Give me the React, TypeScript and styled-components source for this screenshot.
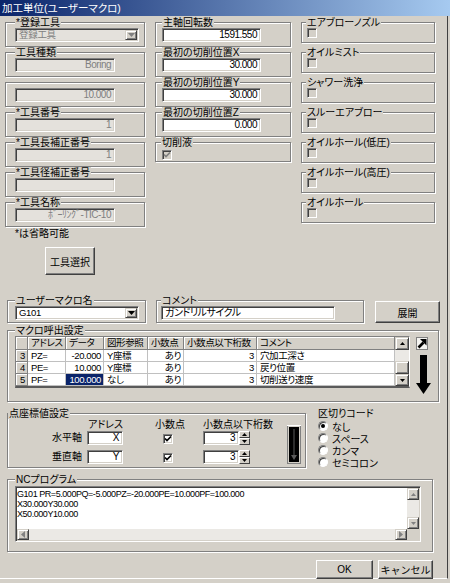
import React from "react";
import styled, { createGlobalStyle } from "styled-components";

const FACE = "#d4d0c8";
const SHADOW = "#808080";
const DARK = "#404040";
const HILITE = "#ffffff";

const GlobalStyle = createGlobalStyle`
  html, body { margin: 0; padding: 0; background: ${FACE}; }
  body {
    font-family: "Liberation Sans", "Noto Sans CJK JP", sans-serif;
    font-size: 10px;
    color: #000;
    font-feature-settings: "palt";
  }
  *, *::before, *::after { box-sizing: border-box; }
`;

const Window = styled.div`
  width: 450px;
  height: 583px;
  background: ${FACE};
  display: flex;
  flex-direction: column;
  overflow: hidden;
`;

const TitleBar = styled.div`
  height: 16px;
  flex: none;
  background: linear-gradient(to right, #0a246a 0%, #a6caf0 100%);
  color: #fff;
  padding-left: 2px;
  line-height: 16px;
  font-size: 10.5px;
  white-space: nowrap;
`;

const Body = styled.div`
  width: 448px;
  height: 563px;
  flex: none;
  border-right: 1px solid ${DARK};
  border-bottom: 1px solid ${HILITE};
  padding: 1px 0 0 5px;
  display: flex;
  flex-direction: column;
`;

const TopSection = styled.div`
  display: grid;
  grid-template-columns: 140px 136px 134px;
  column-gap: 10px;
  align-items: start;
  width: 430px;
`;

const Column = styled.div<{ $gap?: number }>`
  display: flex;
  flex-direction: column;
  gap: ${(p) => p.$gap ?? 0}px;
`;

const Group = styled.fieldset<{
  $pl?: number;
  $pr?: number;
  $pb?: number;
  $w?: number;
  $bare?: boolean;
}>`
  margin: ${(p) => (p.$bare ? "5px 0 0 0" : "0")};
  min-width: 0;
  min-inline-size: 0;
  ${(p) => (p.$w ? `width: ${p.$w}px; flex: none;` : "")}
  border: 1px solid ${SHADOW};
  box-shadow: 1px 1px 0 ${HILITE}, inset 1px 1px 0 ${HILITE};
  padding: ${(p) => (p.$bare ? 5 : 0)}px ${(p) => p.$pr ?? 4}px ${(p) => p.$pb ?? 4}px
    ${(p) => p.$pl ?? 4}px;
`;

const Legend = styled.legend`
  padding: 0 1px;
  margin-left: 0;
  height: 11px;
  line-height: 11px;
  font-size: 10px;
  background: ${FACE};
  white-space: nowrap;
`;

const sunken = `
  border: 1px solid;
  border-color: ${SHADOW} ${HILITE} ${HILITE} ${SHADOW};
  box-shadow: inset 1px 1px 0 ${DARK}, inset -1px -1px 0 ${FACE};
`;

const raised = `
  border: 1px solid;
  border-color: ${FACE} ${DARK} ${DARK} ${FACE};
  box-shadow: inset 1px 1px 0 ${HILITE}, inset -1px -1px 0 ${SHADOW};
`;

const Field = styled.div<{ $off?: boolean; $align?: "left" | "right"; $w?: number }>`
  height: 14px;
  ${(p) => (p.$w ? `width: ${p.$w}px; flex: none;` : "width: 100%;")}
  ${sunken}
  background: ${(p) => (p.$off ? "#e4e1dc" : "#fff")};
  color: ${(p) => (p.$off ? SHADOW : "#000")};
  text-align: ${(p) => p.$align ?? "right"};
  padding: 0 3px;
  font-size: 10px;
  letter-spacing: -0.5px;
  line-height: 12px;
  white-space: nowrap;
  overflow: hidden;
`;

const Combo = styled.div<{ $off?: boolean }>`
  height: 14px;
  width: 100%;
  display: flex;
  align-items: stretch;
  ${sunken}
  padding: 1px;
  background: ${(p) => (p.$off ? "#e4e1dc" : "#fff")};
`;

const ComboText = styled.div<{ $off?: boolean }>`
  flex: 1;
  padding: 0 2px;
  line-height: 10px;
  font-size: 9.5px;
  letter-spacing: -0.3px;
  color: ${(p) => (p.$off ? SHADOW : "#000")};
  white-space: nowrap;
  overflow: hidden;
`;

const DropButton = styled.div`
  width: 12px;
  flex: none;
  background: ${FACE};
  ${raised}
  display: flex;
  align-items: center;
  justify-content: center;
`;

const CheckBox = styled.span<{ $off?: boolean }>`
  display: inline-flex;
  width: 10px;
  height: 10px;
  flex: none;
  ${sunken}
  background: ${(p) => (p.$off ? FACE : "#fff")};
  align-items: center;
  justify-content: center;
`;

const CheckRow = styled.div<{ $mt?: number }>`
  display: flex;
  height: 10px;
  margin-top: ${(p) => p.$mt ?? 0}px;
  padding-left: 1px;
`;

const Note = styled.div`
  margin-top: 1px;
  padding-left: 10px;
  line-height: 12px;
  white-space: nowrap;
`;

const PushButton = styled.button<{ $w: number; $h: number }>`
  width: ${(p) => p.$w}px;
  height: ${(p) => p.$h}px;
  flex: none;
  padding: 0;
  margin: 0;
  font-family: inherit;
  font-size: 10px;
  color: #000;
  background: ${FACE};
  border: 1px solid;
  border-color: ${HILITE} ${DARK} ${DARK} ${HILITE};
  box-shadow: inset -1px -1px 0 ${SHADOW};
`;

const ToolButtonWrap = styled.div`
  margin: 7px 0 0 40px;
  display: flex;
`;

const Separator = styled.div`
  width: 433px;
  height: 2px;
  margin-top: 14px;
  background: ${DARK};
  box-shadow: 0 1px 0 ${HILITE};
`;

const MacroRow = styled.div`
  display: flex;
  align-items: flex-start;
  margin: 6px 0 0 2px;
  gap: 10px;
`;

const ExpandWrap = styled.div`
  margin: 6px 0 0 1px;
  display: flex;
`;

const CallGroupWrap = styled.div`
  margin: 2px 0 0 2px;
  display: flex;
`;

const CallContent = styled.div`
  display: flex;
  align-items: flex-start;
`;

const Table = styled.div`
  width: 395px;
  flex: none;
  border: 1px solid;
  border-color: ${SHADOW} ${HILITE} #5a5a5a ${SHADOW};
  border-bottom-width: 2px;
  display: grid;
  grid-template-columns: 12px 38px 38px 44px 36px 73px 138px 14px;
  grid-template-rows: 13px 12px 12px 12px;
  background: #fff;
  font-size: 9.5px;
  letter-spacing: -0.4px;
`;

const Cell = styled.div<{
  $kind?: "head" | "rowhead" | "data";
  $align?: "left" | "right";
  $sel?: boolean;
}>`
  padding: 0 2px 0 3px;
  line-height: ${(p) => (p.$kind === "head" ? 12 : 11)}px;
  white-space: nowrap;
  overflow: hidden;
  text-align: ${(p) => p.$align ?? "left"};
  border-right: 1px solid ${(p) => (p.$kind === "data" ? "#c0c0c0" : SHADOW)};
  border-bottom: 1px solid ${(p) => (p.$kind === "data" ? "#c0c0c0" : SHADOW)};
  background: ${(p) =>
    p.$kind === "head" || p.$kind === "rowhead" ? FACE : p.$sel ? "#0a246a" : "#fff"};
  color: ${(p) => (p.$sel ? "#fff" : "#000")};
  box-shadow: ${(p) =>
    p.$kind === "head" || p.$kind === "rowhead" ? `inset 1px 1px 0 ${HILITE}` : "none"};
`;

const VScroll = styled.div`
  grid-column: 8;
  grid-row: 1 / span 4;
  display: flex;
  flex-direction: column;
  background: #ebe9e5;
`;

const ScrollBtn = styled.div<{ $w: number; $h: number }>`
  width: ${(p) => p.$w}px;
  height: ${(p) => p.$h}px;
  flex: none;
  background: ${FACE};
  ${raised}
  display: flex;
  align-items: center;
  justify-content: center;
`;

const Track = styled.div<{ $dir: "v" | "h"; $end?: boolean }>`
  flex: 1;
  display: flex;
  flex-direction: ${(p) => (p.$dir === "v" ? "column" : "row")};
  justify-content: ${(p) => (p.$end ? "flex-end" : "flex-start")};
  background: #ebe9e5;
`;

const Thumb = styled.div`
  height: 13px;
  width: 14px;
  background: ${FACE};
  ${raised}
`;

const ArrowColumn = styled.div`
  display: flex;
  flex-direction: column;
  align-items: flex-start;
  margin: 1px 0 0 6px;
  gap: 5px;
`;

const PointRow = styled.div`
  display: flex;
  margin: 6px 0 0 2px;
  align-items: flex-start;
`;

const PointContent = styled.div`
  display: flex;
  align-items: flex-end;
`;

const PointGrid = styled.div`
  display: grid;
  grid-template-columns: 79px 36px 80px 64px;
  grid-template-rows: 12px 19px 14px;
  align-items: start;
`;

const HeadText = styled.div<{ $ml?: number }>`
  line-height: 11px;
  margin-left: ${(p) => p.$ml ?? 0}px;
  white-space: nowrap;
`;

const AxisLabel = styled.div`
  line-height: 14px;
  text-align: right;
  padding-right: 5px;
`;

const CheckCell = styled.div`
  margin: 3px 0 0 40px;
  display: flex;
`;

const Spin = styled.div`
  display: flex;
  height: 14px;
`;

const SpinButtons = styled.div`
  width: 11px;
  display: flex;
  flex-direction: column;
`;

const SpinButton = styled.div`
  flex: 1;
  background: ${FACE};
  border: 1px solid;
  border-color: ${HILITE} ${DARK} ${DARK} ${HILITE};
  display: flex;
  align-items: center;
  justify-content: center;
`;

const IndicatorWrap = styled.div`
  margin: 0 0 0 20px;
  display: flex;
`;

const Delimiter = styled.div`
  margin-left: 12px;
  display: flex;
  flex-direction: column;
`;

const DelimTitle = styled.div`
  line-height: 12px;
  white-space: nowrap;
`;

const RadioRow = styled.div`
  display: flex;
  align-items: center;
  height: 12px;
  gap: 4px;
  white-space: nowrap;
`;

const RadioDot = styled.span<{ $on?: boolean }>`
  width: 10px;
  height: 10px;
  flex: none;
  border-radius: 50%;
  background: #fff;
  border: 1px solid;
  border-color: ${SHADOW} ${HILITE} ${HILITE} ${SHADOW};
  box-shadow: inset 1px 1px 0 ${DARK};
  display: flex;
  align-items: center;
  justify-content: center;
  &::after {
    content: "";
    width: 4px;
    height: 4px;
    border-radius: 50%;
    background: ${(p) => (p.$on ? "#000" : "transparent")};
  }
`;

const NCWrap = styled.div`
  margin: 6px 0 0 2px;
  display: flex;
`;

const TextBox = styled.div`
  margin-top: 1px;
  width: 406px;
  height: 56px;
  border: 1px solid;
  border-color: ${SHADOW} ${HILITE} ${HILITE} ${SHADOW};
  box-shadow: inset 1px 1px 0 ${DARK}, inset -1px -1px 0 ${FACE};
  padding: 1px;
  display: grid;
  grid-template-columns: 1fr 12px;
  grid-template-rows: 1fr 11px;
  background: #fff;
`;

const CodeText = styled.div`
  padding: 1px 0 0 0;
  line-height: 10px;
  font-size: 9px;
  letter-spacing: -0.45px;
  white-space: pre;
  overflow: hidden;
`;

const ScrollLine = styled.div<{ $dir: "v" | "h" }>`
  display: flex;
  flex-direction: ${(p) => (p.$dir === "v" ? "column" : "row")};
  background: #ebe9e5;
`;

const Corner = styled.div`
  background: ${FACE};
`;

const ButtonRow = styled.div`
  width: 428px;
  display: flex;
  justify-content: flex-end;
  gap: 5px;
  margin-top: 8px;
`;

function Tri({ dir, color = "#000" }: { dir: "up" | "down" | "left" | "right"; color?: string }) {
  const vertical = dir === "up" || dir === "down";
  const w = vertical ? 7 : 4;
  const h = vertical ? 4 : 7;
  const pts = {
    up: "0,4 7,4 3.5,0",
    down: "0,0 7,0 3.5,4",
    left: "4,0 4,7 0,3.5",
    right: "0,0 0,7 4,3.5",
  }[dir];
  return (
    <svg width={w} height={h} viewBox={`0 0 ${w} ${h}`}>
      <polygon points={pts} fill={color} />
    </svg>
  );
}

function SmallTri({ dir, color = "#000" }: { dir: "up" | "down"; color?: string }) {
  return (
    <svg width="5" height="3" viewBox="0 0 5 3">
      <polygon points={dir === "up" ? "0,3 5,3 2.5,0" : "0,0 5,0 2.5,3"} fill={color} />
    </svg>
  );
}

function Tick({ color = "#000" }: { color?: string }) {
  return (
    <svg width="8" height="8" viewBox="0 0 8 8">
      <path d="M1 3.5 L3 5.5 L7 1.5" stroke={color} strokeWidth="1.7" fill="none" />
    </svg>
  );
}

function NEArrow() {
  return (
    <svg width="12" height="13" viewBox="0 0 12 13">
      <rect x="0.5" y="0.5" width="11" height="12" fill="#f4f3f0" stroke="#808080" />
      <path d="M2.5 10.5 L7.5 5.5" stroke="#000" strokeWidth="2.6" />
      <polygon points="4,2 10.5,2 10.5,8.5" fill="#000" />
    </svg>
  );
}

function DownArrow() {
  return (
    <svg width="15" height="39" viewBox="0 0 15 39">
      <rect x="4" y="0" width="7" height="30" fill="#000" />
      <polygon points="0,28 15,28 7.5,39" fill="#000" />
    </svg>
  );
}

function Indicator() {
  return (
    <svg width="14" height="39" viewBox="0 0 14 39">
      <rect x="0.5" y="0.5" width="13" height="38" fill="#d4d0c8" stroke="#808080" />
      <rect x="0" y="0" width="14" height="1" fill="#fff" />
      <rect x="2" y="2" width="10" height="35" fill="#000" />
      <line x1="7" y1="4" x2="7" y2="30" stroke="#5a5a5a" strokeWidth="1" />
      <polygon points="4,30 10,30 7,35" fill="#5a5a5a" />
    </svg>
  );
}

type Row = {
  n: number;
  addr: string;
  data: string;
  ref: string;
  dec: string;
  digits: string;
  comment: string;
  sel?: boolean;
};

const rows: Row[] = [
  { n: 3, addr: "PZ=", data: "-20.000", ref: "Y座標", dec: "あり", digits: "3", comment: "穴加工深さ" },
  { n: 4, addr: "PE=", data: "10.000", ref: "Y座標", dec: "あり", digits: "3", comment: "戻り位置" },
  { n: 5, addr: "PF=", data: "100.000", ref: "なし", dec: "あり", digits: "3", comment: "切削送り速度", sel: true },
];

const leftFields = [
  { label: "*工具番号", value: "1" },
  { label: "*工具長補正番号", value: "1" },
  { label: "*工具径補正番号", value: "" },
  { label: "*工具名称", value: "ﾎﾞｰﾘﾝｸﾞ-TIC-10" },
];

const midFields = [
  { label: "主軸回転数", value: "1591.550" },
  { label: "最初の切削位置X", value: "30.000" },
  { label: "最初の切削位置Y", value: "30.000" },
  { label: "最初の切削位置Z", value: "0.000" },
];

const coolants = [
  "エアブローノズル",
  "オイルミスト",
  "シャワー洗浄",
  "スルーエアブロー",
  "オイルホール(低圧)",
  "オイルホール(高圧)",
  "オイルホール",
];

const delimiters = ["なし", "スペース", "カンマ", "セミコロン"];

const ncLines = [
  "G101 PR=5.000PQ=-5.000PZ=-20.000PE=10.000PF=100.000",
  "X30.000Y30.000",
  "X50.000Y10.000",
].join("\n");

export default function App() {
  return (
    <>
      <GlobalStyle />
      <Window>
        <TitleBar>加工単位(ユーザーマクロ)</TitleBar>
        <Body>
          <TopSection>
            <Column>
              <Group $pl={9} $pr={5}>
                <Legend>*登録工具</Legend>
                <Combo $off>
                  <ComboText $off>登録工具</ComboText>
                  <DropButton>
                    <Tri dir="down" color={SHADOW} />
                  </DropButton>
                </Combo>
              </Group>
              <Group $pl={9} $pr={5}>
                <Legend>工具種類</Legend>
                <Field $off $w={100}>
                  Boring
                </Field>
              </Group>
              <Group $pl={9} $pr={5} $bare>
                <Field $off $w={100}>
                  10.000
                </Field>
              </Group>
              {leftFields.map((f) => (
                <Group key={f.label} $pl={9} $pr={5}>
                  <Legend>{f.label}</Legend>
                  <Field $off $w={100}>
                    {f.value}
                  </Field>
                </Group>
              ))}
              <Note>*は省略可能</Note>
              <ToolButtonWrap>
                <PushButton $w={50} $h={28}>工具選択</PushButton>
              </ToolButtonWrap>
            </Column>

            <Column>
              {midFields.map((f) => (
                <Group key={f.label} $pl={6} $pr={29}>
                  <Legend>{f.label}</Legend>
                  <Field>{f.value}</Field>
                </Group>
              ))}
              <Group $pl={5} $pr={4} $pb={1}>
                <Legend>切削液</Legend>
                <CheckRow $mt={2}>
                  <CheckBox $off>
                    <Tick color={SHADOW} />
                  </CheckBox>
                </CheckRow>
              </Group>
            </Column>

            <Column $gap={4}>
              {coolants.map((c) => (
                <Group key={c} $pl={4} $pr={4}>
                  <Legend>{c}</Legend>
                  <CheckRow>
                    <CheckBox $off />
                  </CheckRow>
                </Group>
              ))}
            </Column>
          </TopSection>

          <Separator />

          <MacroRow>
            <Group $w={139} $pl={7} $pr={6} $pb={2}>
              <Legend>ユーザーマクロ名</Legend>
              <Combo>
                <ComboText>G101</ComboText>
                <DropButton>
                  <Tri dir="down" />
                </DropButton>
              </Combo>
            </Group>
            <Group $w={208} $pl={4} $pr={28} $pb={2}>
              <Legend>コメント</Legend>
              <Field $align="left">ガンドリルサイクル</Field>
            </Group>
            <ExpandWrap>
              <PushButton $w={65} $h={22}>展開</PushButton>
            </ExpandWrap>
          </MacroRow>

          <CallGroupWrap>
            <Group $w={432} $pl={7} $pr={4} $pb={7}>
              <Legend>マクロ呼出設定</Legend>
              <CallContent>
                <Table>
                  <Cell $kind="head" />
                  <Cell $kind="head">アドレス</Cell>
                  <Cell $kind="head">データ</Cell>
                  <Cell $kind="head">図形参照</Cell>
                  <Cell $kind="head">小数点</Cell>
                  <Cell $kind="head">小数点以下桁数</Cell>
                  <Cell $kind="head">コメント</Cell>
                  <VScroll>
                    <ScrollBtn $w={14} $h={13}>
                      <SmallTri dir="up" />
                    </ScrollBtn>
                    <Track $dir="v" $end>
                      <Thumb />
                    </Track>
                    <ScrollBtn $w={14} $h={12}>
                      <SmallTri dir="down" />
                    </ScrollBtn>
                  </VScroll>
                  {rows.map((r) => (
                    <React.Fragment key={r.n}>
                      <Cell $kind="rowhead" $align="right">
                        {r.n}
                      </Cell>
                      <Cell $kind="data">{r.addr}</Cell>
                      <Cell $kind="data" $align="right" $sel={r.sel}>
                        {r.data}
                      </Cell>
                      <Cell $kind="data">{r.ref}</Cell>
                      <Cell $kind="data" $align="right">
                        {r.dec}
                      </Cell>
                      <Cell $kind="data" $align="right">
                        {r.digits}
                      </Cell>
                      <Cell $kind="data">{r.comment}</Cell>
                    </React.Fragment>
                  ))}
                </Table>
                <ArrowColumn>
                  <NEArrow />
                  <DownArrow />
                </ArrowColumn>
              </CallContent>
            </Group>
          </CallGroupWrap>

          <PointRow>
            <Group $w={299} $pl={0} $pr={3} $pb={3}>
              <Legend>点座標値設定</Legend>
              <PointContent>
                <PointGrid>
                  <div />
                  <HeadText $ml={1}>アドレス</HeadText>
                  <HeadText $ml={32}>小数点</HeadText>
                  <HeadText>小数点以下桁数</HeadText>

                  <AxisLabel>水平軸</AxisLabel>
                  <Field $w={36}>X</Field>
                  <CheckCell>
                    <CheckBox>
                      <Tick />
                    </CheckBox>
                  </CheckCell>
                  <Spin>
                    <Field $w={36}>3</Field>
                    <SpinButtons>
                      <SpinButton>
                        <SmallTri dir="up" />
                      </SpinButton>
                      <SpinButton>
                        <SmallTri dir="down" />
                      </SpinButton>
                    </SpinButtons>
                  </Spin>

                  <AxisLabel>垂直軸</AxisLabel>
                  <Field $w={36}>Y</Field>
                  <CheckCell>
                    <CheckBox>
                      <Tick />
                    </CheckBox>
                  </CheckCell>
                  <Spin>
                    <Field $w={36}>3</Field>
                    <SpinButtons>
                      <SpinButton>
                        <SmallTri dir="up" />
                      </SpinButton>
                      <SpinButton>
                        <SmallTri dir="down" />
                      </SpinButton>
                    </SpinButtons>
                  </Spin>
                </PointGrid>
                <IndicatorWrap>
                  <Indicator />
                </IndicatorWrap>
              </PointContent>
            </Group>
            <Delimiter>
              <DelimTitle>区切りコード</DelimTitle>
              {delimiters.map((d, i) => (
                <RadioRow key={d}>
                  <RadioDot $on={i === 0} />
                  {d}
                </RadioRow>
              ))}
            </Delimiter>
          </PointRow>

          <NCWrap>
            <Group $w={426} $pl={7} $pr={4} $pb={9}>
              <Legend>NCプログラム</Legend>
              <TextBox>
                <CodeText>{ncLines}</CodeText>
                <ScrollLine $dir="v">
                  <ScrollBtn $w={12} $h={12}>
                    <SmallTri dir="up" color={SHADOW} />
                  </ScrollBtn>
                  <Track $dir="v" />
                  <ScrollBtn $w={12} $h={12}>
                    <SmallTri dir="down" color={SHADOW} />
                  </ScrollBtn>
                </ScrollLine>
                <ScrollLine $dir="h">
                  <ScrollBtn $w={12} $h={11}>
                    <Tri dir="left" color={SHADOW} />
                  </ScrollBtn>
                  <Track $dir="h" />
                  <ScrollBtn $w={12} $h={11}>
                    <Tri dir="right" color={SHADOW} />
                  </ScrollBtn>
                </ScrollLine>
                <Corner />
              </TextBox>
            </Group>
          </NCWrap>

          <ButtonRow>
            <PushButton $w={57} $h={19}>OK</PushButton>
            <PushButton $w={55} $h={19}>キャンセル</PushButton>
          </ButtonRow>
        </Body>
      </Window>
    </>
  );
}
